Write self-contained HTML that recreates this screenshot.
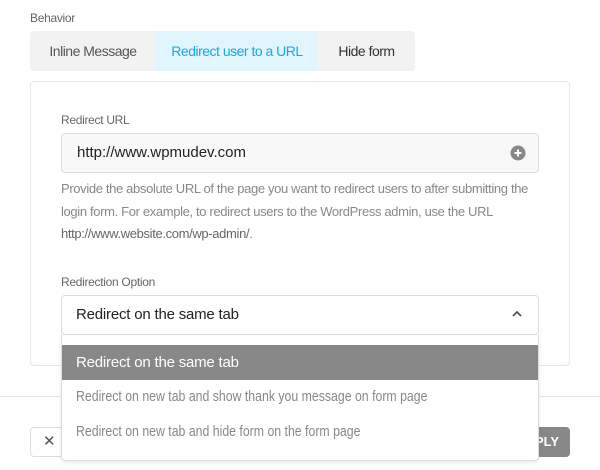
<!DOCTYPE html>
<html><head><style>
*{box-sizing:border-box;margin:0;padding:0}
body{width:600px;height:470px;background:#fff;font-family:"Liberation Sans",sans-serif;position:relative;overflow:hidden}
.a{position:absolute}
.sx{transform:scaleX(0.82);transform-origin:left center;white-space:nowrap}
</style></head><body>
<div class="a" style="left:30px;top:11px;font-size:12px;color:#666;letter-spacing:-0.3px">Behavior</div>
<div class="a" style="left:30px;top:31px;width:385px;height:40px;background:#f2f2f2;border-radius:4px;overflow:hidden;font-size:14px;letter-spacing:-0.5px">
 <div class="a" style="left:0;width:126px;height:40px;line-height:40px;text-align:center;color:#555">Inline Message</div>
 <div class="a" style="left:126px;width:162px;height:40px;line-height:40px;text-align:center;color:#17a8e3;background:#e1f5fe">Redirect user to a URL</div>
 <div class="a" style="left:288px;width:97px;height:40px;line-height:40px;text-align:center;color:#333">Hide form</div>
</div>
<div class="a" style="left:30px;top:81px;width:540px;height:285px;border:1px solid #e6e6e6;border-radius:4px"></div>
<div class="a" style="left:61px;top:113px;font-size:12px;color:#666;letter-spacing:-0.3px">Redirect URL</div>
<div class="a" style="left:61px;top:133px;width:478px;height:40px;background:#f8f8f8;border:1px solid #ddd;border-radius:4px;font-size:15px;line-height:38px;padding-left:15px;color:#222">http://www.wpmudev.com</div>
<svg class="a" style="left:510px;top:145px" width="16" height="16"><circle cx="8" cy="8" r="7.5" fill="#888"/><path d="M8 4.5v7M4.5 8h7" stroke="#fff" stroke-width="2"/></svg>
<div class="a" style="left:61px;top:178px;width:490px;font-size:13px;letter-spacing:-0.35px;line-height:22.5px;color:#888">Provide the absolute URL of the page you want to redirect users to after submitting the<br>login form. For example, to redirect users to the WordPress admin, use the URL<br><span style="color:#666">http://www.website.com/wp-admin/</span>.</div>
<div class="a" style="left:61px;top:275px;font-size:12px;color:#666;letter-spacing:-0.3px">Redirection Option</div>
<div class="a" style="left:61px;top:295px;width:478px;height:40px;background:#fff;border:1px solid #ddd;border-radius:4px;font-size:15px;letter-spacing:-0.2px;line-height:38px;padding-left:14px;color:#222">Redirect on the same tab</div>
<svg class="a" style="left:511px;top:309px" width="12" height="10"><path d="M2 7l4-4 4 4" stroke="#555" stroke-width="1.8" fill="none"/></svg>
<div class="a" style="left:0;top:396px;width:600px;height:1px;background:#e6e6e6"></div>
<div class="a" style="left:30px;top:427px;width:40px;height:30px;border:1px solid #ddd;border-radius:4px;font-size:15px;line-height:28px;padding-left:12px;color:#555">✕</div>
<div class="a" style="left:500px;top:427px;width:70px;height:30px;background:#888;border-radius:4px;font-size:13px;font-weight:bold;line-height:30px;padding-left:35px;color:#fff">PLY</div>
<div class="a" style="left:61px;top:335px;width:478px;height:126px;background:#fff;border:1px solid #ddd;border-top:none;border-radius:0 0 4px 4px;box-shadow:0 2px 6px rgba(0,0,0,.08);font-size:15px">
 <div class="a" style="left:0;top:10px;width:476px;height:35px;background:#888;color:#fff;font-size:15px;letter-spacing:-0.2px;line-height:35px;padding-left:14px">Redirect on the same tab</div>
 <div class="a sx" style="left:14px;top:53px;color:#888">Redirect on new tab and show thank you message on form page</div>
 <div class="a sx" style="left:14px;top:88px;color:#888">Redirect on new tab and hide form on the form page</div>
</div>
</body></html>
